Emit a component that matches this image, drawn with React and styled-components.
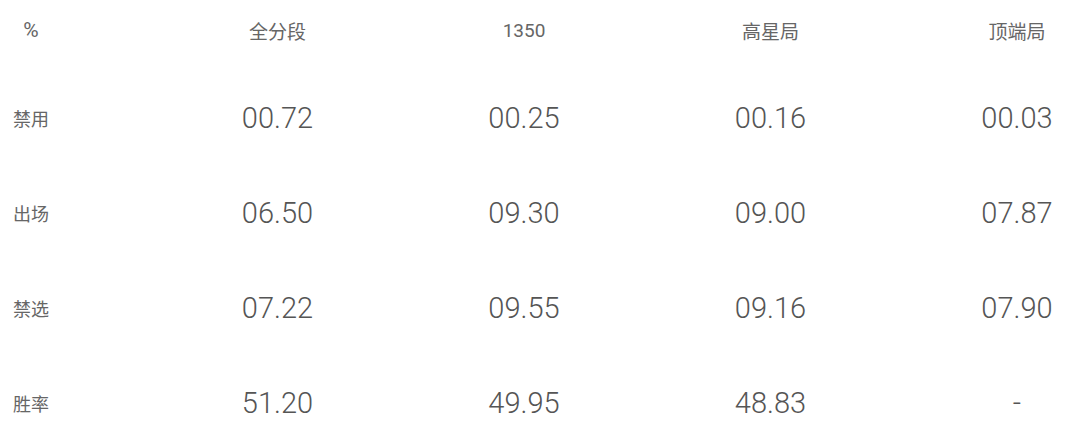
import React from "react";
import styled, { createGlobalStyle } from "styled-components";

const Global = createGlobalStyle`
  html, body { margin: 0; padding: 0; background: #fff; }
  body { font-family: Roboto, "Noto Sans CJK SC", sans-serif; }
`;

const Table = styled.div`
  width: 1080px;
  padding-right: 32px;
  box-sizing: border-box;
`;

const Row = styled.div`
  display: grid;
  grid-template-columns: repeat(5, 62px);
  justify-content: space-between;
  align-items: center;
  height: ${(p) => (p.$head ? "60px" : "95px")};
  margin-bottom: ${(p) => (p.$head ? "10px" : "0")};
`;

const HeadCell = styled.div`
  white-space: nowrap;
  font-family: Roboto, "Noto Sans CJK SC", sans-serif;
  font-size: ${(p) => (p.$wide ? "21px" : "19px")};
  color: #666;
  display: flex;
  justify-content: center;
`;

const Label = styled.div`
  white-space: nowrap;
  font-family: "Noto Sans CJK SC", sans-serif;
  font-size: 18px;
  color: #666;
  display: flex;
  justify-content: center;
`;

const Value = styled.div`
  white-space: nowrap;
  font-family: Roboto, sans-serif;
  font-weight: 300;
  font-size: 29px;
  color: #555;
  display: flex;
  justify-content: center;
`;

const heads = ["%", "全分段", "1350", "高星局", "顶端局"];
const rows = [
  ["禁用", "00.72", "00.25", "00.16", "00.03"],
  ["出场", "06.50", "09.30", "09.00", "07.87"],
  ["禁选", "07.22", "09.55", "09.16", "07.90"],
  ["胜率", "51.20", "49.95", "48.83", "-"],
];

export default function App() {
  return (
    <>
      <Global />
      <Table>
        <Row $head>
          {heads.map((h) => (
            <HeadCell key={h} $wide={h === "%"}>
              {h}
            </HeadCell>
          ))}
        </Row>
        {rows.map((r) => (
          <Row key={r[0]}>
            <Label>{r[0]}</Label>
            {r.slice(1).map((v, i) => (
              <Value key={i}>{v}</Value>
            ))}
          </Row>
        ))}
      </Table>
    </>
  );
}
